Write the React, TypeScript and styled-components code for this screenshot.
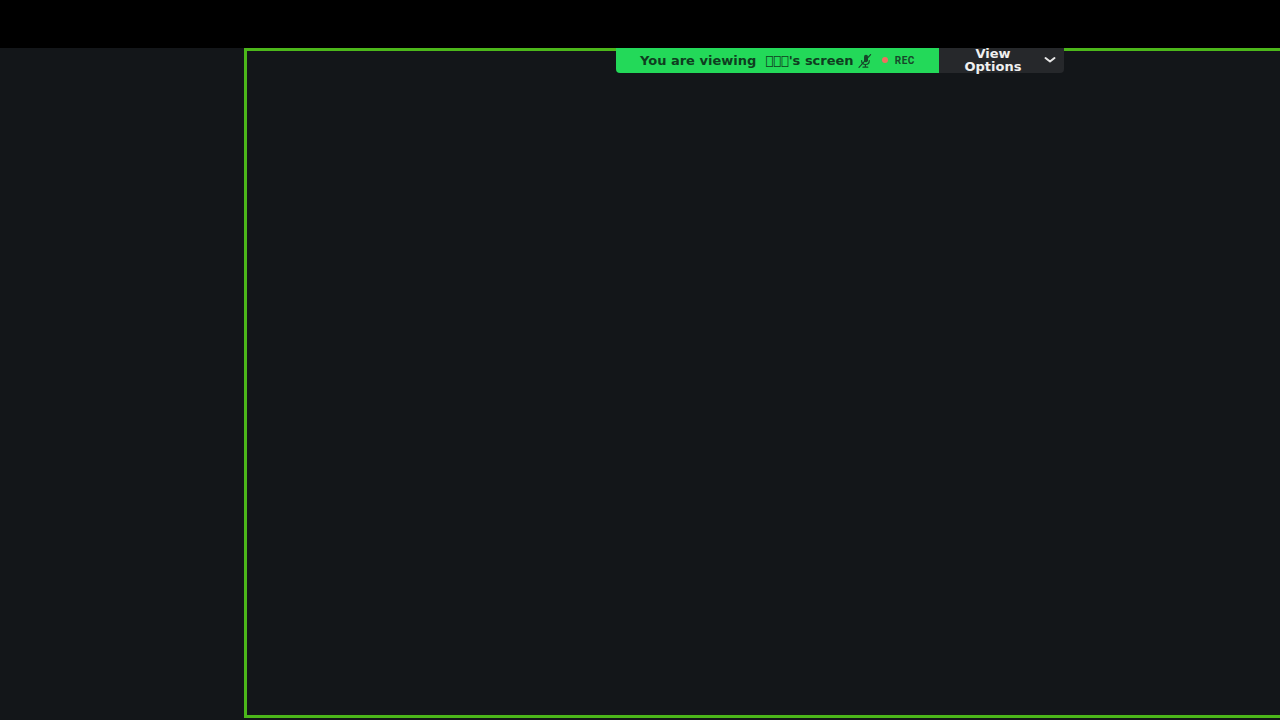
import React from 'react';
import styled, { createGlobalStyle } from 'styled-components';

const GlobalStyle = createGlobalStyle`
  html, body {
    margin: 0;
    padding: 0;
    background: #000;
    overflow: hidden;
  }
`;

const App = () => {
  return (
    <Page>
      <GlobalStyle />
      <TopBar />
      <Body>
        <SideArea />
        <ShareArea>
          <Banner>
            <ViewingStatus>
              <StatusText>You are viewing</StatusText>
              <StatusText>{'\uE000\uE000\uE000'}'s screen</StatusText>
              <MutedMicIcon />
              <RecDot />
              <RecLabel>REC</RecLabel>
            </ViewingStatus>
            <ViewOptions>
              <OptionsLabel>View Options</OptionsLabel>
              <ChevronIcon />
            </ViewOptions>
          </Banner>
        </ShareArea>
      </Body>
    </Page>
  );
};

const MutedMicIcon = () => (
  <MicSvg viewBox="0 0 14 14" fill="none" stroke="#17472a" strokeWidth="1.2" strokeLinecap="round">
    <path d="M6 2.8a2 2 0 0 1 4 0v3.4a2 2 0 0 1-3 1.7L6 7z" fill="#17472a" stroke="none" />
    <path d="M3.6 6.5c0 2.4 1.6 4 4 4 2.2 0 3.7-1.6 3.7-4" />
    <path d="M7.4 10.5v2.6M5 13.2h4.8" />
    <path d="M12.6.6 1 13.4" />
  </MicSvg>
);

const ChevronIcon = () => (
  <ChevronSvg viewBox="0 0 12 8" fill="none" stroke="#e6e6e6" strokeWidth="2" strokeLinecap="round" strokeLinejoin="round">
    <path d="M1.5 2 6 5.5 10.5 2" />
  </ChevronSvg>
);

const Page = styled.div`
  width: 1280px;
  height: 720px;
  display: flex;
  flex-direction: column;
  font-family: 'DejaVu Sans', sans-serif;
`;

const TopBar = styled.div`
  height: 48px;
  flex: none;
  background: #000;
`;

const Body = styled.div`
  flex: 1;
  display: flex;
  align-items: flex-start;
  min-height: 0;
  background: #131619;
`;

const SideArea = styled.div`
  width: 244px;
  flex: none;
`;

const ShareArea = styled.div`
  flex: 1;
  height: 670px;
  position: relative;
  box-sizing: border-box;
  border: solid #4cb71a;
  border-width: 3px 0 3px 3px;
`;

const Banner = styled.div`
  position: absolute;
  top: -3px;
  left: 369px;
  width: 448px;
  height: 25px;
  display: flex;
`;

const ViewingStatus = styled.div`
  width: 323px;
  box-sizing: border-box;
  padding-left: 24px;
  display: flex;
  align-items: center;
  background: #23d959;
  border-bottom-left-radius: 4px;
  color: #0f3d20;
`;

const StatusText = styled.span`
  font-size: 13px;
  font-weight: 700;
  white-space: nowrap;
  margin-right: 9px;

  & + & {
    margin-right: 4px;
  }
`;

const MicSvg = styled.svg`
  width: 14px;
  height: 14px;
  flex: none;
`;

const RecDot = styled.span`
  width: 6px;
  height: 6px;
  margin-left: 10px;
  margin-bottom: 1px;
  border-radius: 50%;
  background: #f0705f;
`;

const RecLabel = styled.span`
  margin-left: 7px;
  font-family: 'Roboto', sans-serif;
  font-size: 10px;
  font-weight: 700;
  letter-spacing: 0.6px;
  color: #17472a;
`;

const ViewOptions = styled.div`
  flex: 1;
  display: flex;
  align-items: center;
  background: #26282b;
  border-bottom-right-radius: 4px;
  color: #f0f0f0;
`;

const OptionsLabel = styled.div`
  width: 108px;
  box-sizing: border-box;
  padding: 0 20px 2px;
  font-size: 13px;
  line-height: 13px;
  font-weight: 700;
  text-align: center;
`;

const ChevronSvg = styled.svg`
  width: 12px;
  height: 8px;
  margin: 0 0 2px -3px;
  flex: none;
`;

export default App;
